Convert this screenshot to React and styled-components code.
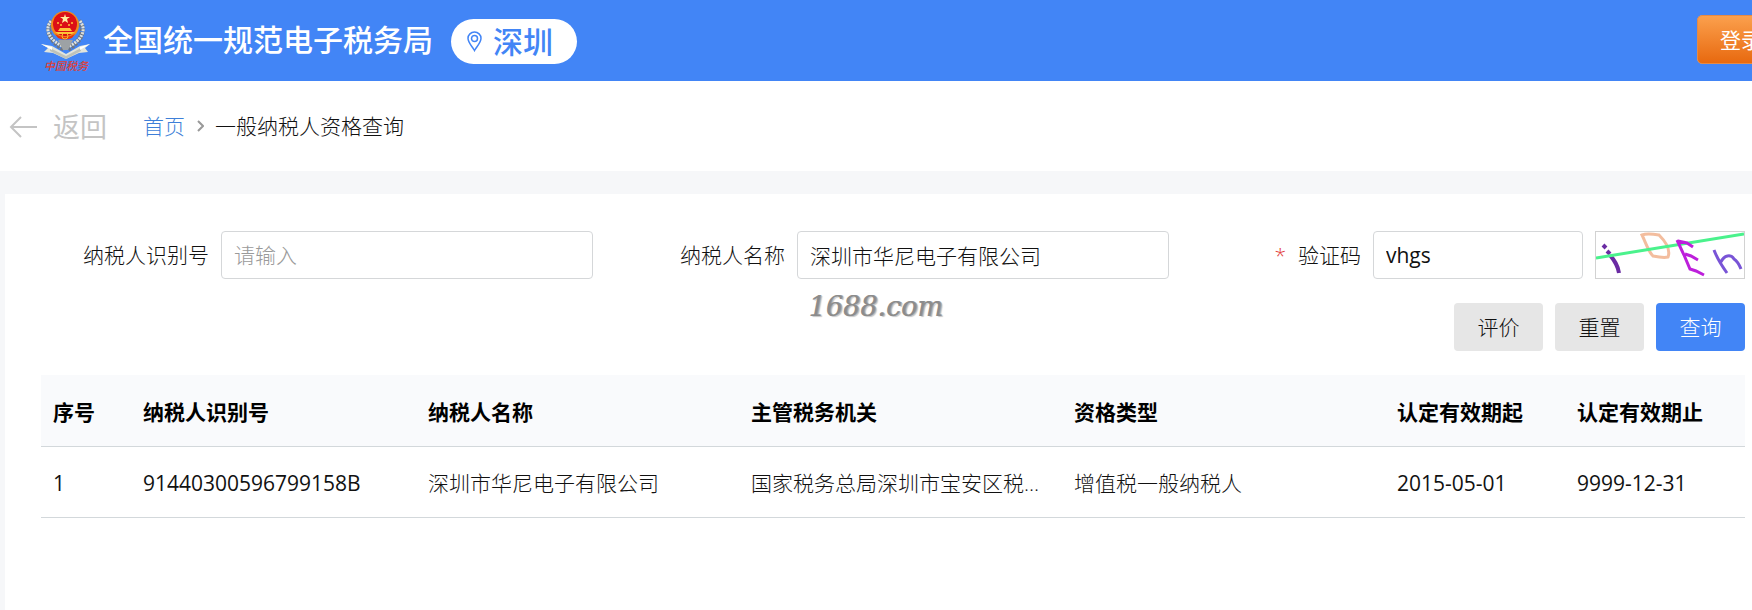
import React, { useState } from 'react'
import styled, { createGlobalStyle } from 'styled-components'

const GlobalStyle = createGlobalStyle`
* {
  box-sizing: border-box;
}

body {
  margin: 0;
  background-color: #f6f7f9;
  color: #111;
  font-family: "Open Sans", "Noto Sans CJK SC", sans-serif;
  font-size: 21px;
  line-height: 30px;
}

button, input {
  font: inherit;
  color: inherit;
}
`

const StyledPage = styled.div`
display: flex;
flex-direction: column;
min-height: 100vh;
overflow: hidden;
`
const StyledHeader = styled.header`
display: flex;
align-items: center;
height: 81px;
padding: 0 0 2px 41px;
background-color: #4285f6;
color: #fff;
`
const StyledEmblem = styled.svg`
flex: none;
width: 50px;
height: 68px;
margin-right: 12px;
`
const StyledSiteName = styled.h1`
margin: 0 18px 0 0;
font-size: 30px;
font-weight: 500;
line-height: 44px;
white-space: nowrap;
`
const StyledCity = styled.button`
display: flex;
align-items: center;
gap: 11px;
height: 45px;
padding: 0 24px 0 16px;
border: 0;
border-radius: 23px;
margin-top: 4px;
background-color: #fff;
color: #4285f6;
font-size: 30px;
font-weight: 500;
line-height: 44px;
white-space: nowrap;
`
const StyledLogin = styled.button`
flex: none;
width: 88px;
height: 49px;
margin: 0 -33px 0 auto;
border: 1px solid #e58a45;
border-radius: 5px;
background-image: linear-gradient(#fba04d, #e8690f);
color: #fff;
`

const Emblem = () => {
  return (
    <StyledEmblem viewBox="0 0 50 68" role="img" aria-label="中国税务">
      <g fill="none" stroke="#6d7582" strokeWidth="5" strokeDasharray="3 1">
        <path d="M11 15C4 23 8 35 23 43" />
        <path d="M38 15C45 23 41 35 27 43" />
      </g>
      <g fill="none" stroke="#dfe2de" strokeWidth="3" strokeDasharray="2 1">
        <path d="M10 15C3 24 8 34 23 41" />
        <path d="M39 15C46 24 41 34 27 41" />
      </g>
      <path d="M17 34h15l-5 10h-5z" fill="#9da2a5" />
      <path d="M0 38l11 2 14 8 14-8 10-2-5 4 3 4-9 1-13 6-13-6-9-1 4-4z" fill="#e2e5dc" />
      <path d="M9 42l16 8 15-8v3l-15 8-16-8z" fill="#bdc2ba" />
      <path d="M0 38l11 3v3zM49 38l-10 3v3z" fill="#fff" />
      <circle cx="24" cy="19" r="14" fill="#f08a1c" />
      <circle cx="24" cy="18" r="12" fill="#dc0f16" />
      <path d="M24 8l1 3h4l-3 2 1 4-3-2-3 2 1-4-3-2h4z" fill="#fff0a0" />
      <g fill="#ffc53a">
        <circle cx="17" cy="17" r="1" />
        <circle cx="20" cy="19" r="1" />
        <circle cx="28" cy="19" r="1" />
        <circle cx="31" cy="17" r="1" />
        <path d="M19 22h10l2 3H17z" />
        <path d="M14 26h20l-3 2H17z" />
      </g>
      <path d="M14 28q10 6 20 0l-3 4q-7 3-14 0z" fill="#e8350f" />
      <circle cx="24" cy="30" r="3" fill="none" stroke="#f8c12d" strokeWidth="1" />
      <text x="3" y="64" fill="#dc3f36" fontSize="11" fontWeight="500" fontStyle="italic">中国税务</text>
    </StyledEmblem>
  )
}

const PinIcon = () => {
  return (
    <svg width="15" height="21" viewBox="0 0 15 21" fill="none" stroke="currentColor" strokeWidth="1.5" aria-hidden="true">
      <path d="M7.5 19.5C5.5 15.5 1 12 1 7.3a6.5 6.3 0 0 1 13 0c0 4.7-4.5 8.2-6.5 12.2z" />
      <circle cx="7.5" cy="7.5" r="3" />
    </svg>
  )
}

const Header = () => {
  return (
    <StyledHeader>
      <Emblem />
      <StyledSiteName>全国统一规范电子税务局</StyledSiteName>
      <StyledCity type="button">
        <PinIcon />
        深圳
      </StyledCity>
      <StyledLogin type="button">登录</StyledLogin>
    </StyledHeader>
  )
}

const StyledCrumbBar = styled.nav`
display: flex;
align-items: center;
height: 90px;
padding-left: 9px;
background-color: #fff;
font-weight: 300;
`
const StyledBack = styled.button`
display: flex;
align-items: center;
gap: 16px;
margin-right: 36px;
padding: 2px 0 0;
border: 0;
background: none;
color: #c4c4c4;
font-size: 27px;
font-weight: 400;
line-height: 40px;
`
const StyledCrumbLink = styled.a`
color: #3e7fd8;
text-decoration: none;
`
const StyledChevron = styled.svg`
margin: 0 11px 0 12px;
`

const Breadcrumb = () => {
  return (
    <StyledCrumbBar aria-label="面包屑">
      <StyledBack type="button">
        <svg width="28" height="22" viewBox="0 0 28 22" fill="none" stroke="currentColor" strokeWidth="2" aria-hidden="true">
          <path d="M28 11H2M12 1L2 11l10 10" />
        </svg>
        返回
      </StyledBack>
      <StyledCrumbLink href="#home">首页</StyledCrumbLink>
      <StyledChevron width="7" height="12" viewBox="0 0 7 12" fill="none" stroke="#999" strokeWidth="2" aria-hidden="true">
        <path d="M1 1l5 5-5 5" />
      </StyledChevron>
      <span aria-current="page">一般纳税人资格查询</span>
    </StyledCrumbBar>
  )
}

const StyledPanel = styled.main`
position: relative;
flex: 1;
margin: 23px 0 0 5px;
padding: 37px 7px 37px 36px;
background-color: #fff;
font-weight: 300;
`
const StyledFields = styled.div`
display: grid;
grid-template-columns: repeat(3, minmax(0, 1fr));
column-gap: 24px;
`
const StyledField = styled.div`
display: flex;
align-items: center;
gap: 12px;
`
const StyledLabel = styled.label`
flex: none;
width: 168px;
text-align: right;
white-space: nowrap;
`
const StyledRequired = styled.span`
margin-right: 12px;
color: #e2413d;
`
const StyledInput = styled.input`
flex: 1;
min-width: 0;
height: 48px;
padding: 0 12px;
border: 1px solid #d5d7d9;
border-radius: 4px;
outline: none;
background-color: #fff;
font-weight: ${({ $latin }) => ($latin ? 400 : 300)};

&::placeholder {
  color: #9a9a9a;
  opacity: 1;
}
`
const StyledCaptcha = styled.svg`
flex: none;
width: 150px;
height: 48px;
border: 1px solid #d2d2d2;
`
const StyledActions = styled.div`
display: flex;
justify-content: flex-end;
gap: 12px;
margin: 24px 0;
`
const StyledButton = styled.button`
width: 89px;
height: 48px;
padding: 0;
border: 0;
border-radius: 4px;
background-color: ${({ $primary }) => ($primary ? '#4285f6' : '#e6e6e6')};
color: ${({ $primary }) => ($primary ? '#fff' : '#111')};
`
const StyledWatermark = styled.span`
position: absolute;
top: 98px;
left: 46%;
color: #8c8c8c;
font-family: "DejaVu Serif", serif;
font-size: 27px;
font-style: italic;
font-weight: 400;
text-shadow: 1px 0 0 #a0a0a0, 2px 1px 1px #c4c4c4;
pointer-events: none;
`

const Captcha = () => {
  return (
    <StyledCaptcha viewBox="0 0 148 46" fill="none" strokeWidth="3" role="img" aria-label="验证码图片">
      <path d="M7 13l3 3M11 19l3 3" stroke="#6a2ba3" strokeWidth="4" />
      <path d="M14 23c4 5 8 10 9 18" stroke="#6a2ba3" strokeWidth="4" />
      <path d="M46 3c4 8 6 16 11 21 5 1 11 2 15 1 3-8-3-16-9-22-6-1-12-2-17 0z" stroke="#f3bd9e" />
      <path d="M0 26L148 2" stroke="#4af28c" />
      <path d="M81 8l7 15 6 14 6 2 8 4M82 9l9 2 6 4M89 22l6 2 7 4" stroke="#bd1fdb" />
      <path d="M118 18c3 8 8 16 13 23M125 30c3-7 10-8 13-3 3 2 5 5 7 10" stroke="#7954d6" />
    </StyledCaptcha>
  )
}

const QueryForm = () => {
  const [taxId, setTaxId] = useState('')
  const [name, setName] = useState('深圳市华尼电子有限公司')
  const [code, setCode] = useState('vhgs')

  const handleSubmit = (event) => {
    event.preventDefault()
  }
  const handleReset = () => {
    setTaxId('')
    setName('')
    setCode('')
  }

  return (
    <form onSubmit={handleSubmit}>
      <StyledFields>
        <StyledField>
          <StyledLabel htmlFor="taxId">纳税人识别号</StyledLabel>
          <StyledInput id="taxId" placeholder="请输入" value={taxId} onChange={(e) => setTaxId(e.target.value)} />
        </StyledField>
        <StyledField>
          <StyledLabel htmlFor="name">纳税人名称</StyledLabel>
          <StyledInput id="name" value={name} onChange={(e) => setName(e.target.value)} />
        </StyledField>
        <StyledField>
          <StyledLabel htmlFor="code">
            <StyledRequired>*</StyledRequired>
            验证码
          </StyledLabel>
          <StyledInput id="code" $latin value={code} onChange={(e) => setCode(e.target.value)} />
          <Captcha />
        </StyledField>
      </StyledFields>
      <StyledActions>
        <StyledButton type="button">评价</StyledButton>
        <StyledButton type="button" onClick={handleReset}>重置</StyledButton>
        <StyledButton type="submit" $primary>查询</StyledButton>
      </StyledActions>
    </form>
  )
}

const columns = [
  { key: 'index', title: '序号', width: '90px', latin: true },
  { key: 'taxId', title: '纳税人识别号', width: '285px', latin: true },
  { key: 'name', title: '纳税人名称' },
  { key: 'office', title: '主管税务机关' },
  { key: 'type', title: '资格类型' },
  { key: 'start', title: '认定有效期起', width: '180px', latin: true },
  { key: 'end', title: '认定有效期止', width: '180px', latin: true },
]
const rows = [
  {
    index: 1,
    taxId: '91440300596799158B',
    name: '深圳市华尼电子有限公司',
    office: '国家税务总局深圳市宝安区税务局',
    type: '增值税一般纳税人',
    start: '2015-05-01',
    end: '9999-12-31',
  },
]
const StyledTable = styled.table`
width: 100%;
border-collapse: separate;
border-spacing: 0;
table-layout: fixed;
`
const StyledTh = styled.th`
width: ${({ $width }) => $width || 'auto'};
height: 72px;
padding: 3px 12px 0;
border-bottom: 1px solid #d3d8db;
background-color: #f9fafc;
color: #000;
font-weight: 700;
text-align: left;
white-space: nowrap;
`
const StyledTd = styled.td`
height: 71px;
padding: 1px 12px 0;
border-bottom: 1px solid #d3d8db;
overflow: hidden;
font-weight: ${({ $latin }) => ($latin ? 400 : 300)};
text-overflow: ellipsis;
white-space: nowrap;
`

const ResultTable = () => {
  return (
    <StyledTable>
      <thead>
        <tr>
          {columns.map((column) => <StyledTh key={column.key} $width={column.width}>{column.title}</StyledTh>)}
        </tr>
      </thead>
      <tbody>
        {rows.map((row) => (
          <tr key={row.index}>
            {columns.map((column) => <StyledTd key={column.key} $latin={column.latin}>{row[column.key]}</StyledTd>)}
          </tr>
        ))}
      </tbody>
    </StyledTable>
  )
}

const App = () => {
  return (
    <StyledPage>
      <GlobalStyle />
      <Header />
      <Breadcrumb />
      <StyledPanel>
        <QueryForm />
        <ResultTable />
        <StyledWatermark>1688.com</StyledWatermark>
      </StyledPanel>
    </StyledPage>
  )
}

export default App
